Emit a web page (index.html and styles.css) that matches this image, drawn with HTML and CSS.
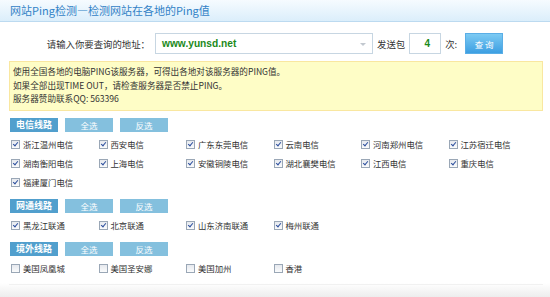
FILE: index.html
```html
<!DOCTYPE html>
<html lang="zh-CN">
<head>
<meta charset="utf-8">
<title>网站Ping检测</title>
<link rel="stylesheet" href="styles.css">
</head>
<body>
<div class="page">
  <div class="header">网站Ping检测—检测网站在各地的Ping值</div>
  <div class="query">
    <span class="q-label">请输入你要查询的地址：</span>
    <div class="url-box"><span class="url">www.yunsd.net</span><span class="arrow"></span></div>
    <span class="q-text">发送包</span>
    <div class="count-box">4</div>
    <span class="q-text">次:</span>
    <button class="btn-query">查 询</button>
  </div>
  <div class="notice">
    <p>使用全国各地的电脑PING该服务器，可得出各地对该服务器的PING值。</p>
    <p>如果全部出现TIME OUT，请检查服务器是否禁止PING。</p>
    <p>服务器赞助联系QQ: 563396</p>
  </div>

  <div class="section">
    <div class="tags"><span class="tag tag-title">电信线路</span><span class="tag">全选</span><span class="tag">反选</span></div>
    <div class="grid">
      <label class="item"><span class="cb on"></span>浙江温州电信</label>
      <label class="item"><span class="cb on"></span>西安电信</label>
      <label class="item"><span class="cb on"></span>广东东莞电信</label>
      <label class="item"><span class="cb on"></span>云南电信</label>
      <label class="item"><span class="cb on"></span>河南郑州电信</label>
      <label class="item"><span class="cb on"></span>江苏宿迁电信</label>
      <label class="item"><span class="cb on"></span>湖南衡阳电信</label>
      <label class="item"><span class="cb on"></span>上海电信</label>
      <label class="item"><span class="cb on"></span>安徽铜陵电信</label>
      <label class="item"><span class="cb on"></span>湖北襄樊电信</label>
      <label class="item"><span class="cb on"></span>江西电信</label>
      <label class="item"><span class="cb on"></span>重庆电信</label>
      <label class="item"><span class="cb on"></span>福建厦门电信</label>
    </div>
  </div>

  <div class="section">
    <div class="tags"><span class="tag tag-title">网通线路</span><span class="tag">全选</span><span class="tag">反选</span></div>
    <div class="grid">
      <label class="item"><span class="cb on"></span>黑龙江联通</label>
      <label class="item"><span class="cb on"></span>北京联通</label>
      <label class="item"><span class="cb on"></span>山东济南联通</label>
      <label class="item"><span class="cb on"></span>梅州联通</label>
    </div>
  </div>

  <div class="section">
    <div class="tags"><span class="tag tag-title">境外线路</span><span class="tag">全选</span><span class="tag">反选</span></div>
    <div class="grid">
      <label class="item"><span class="cb"></span>美国凤凰城</label>
      <label class="item"><span class="cb"></span>美国圣安娜</label>
      <label class="item"><span class="cb"></span>美国加州</label>
      <label class="item"><span class="cb"></span>香港</label>
    </div>
  </div>
  <div class="footer"><div class="footer-line"></div></div>
</div>
</body>
</html>
```
FILE: styles.css
```css
* { box-sizing: border-box; }
html, body { margin: 0; padding: 0; background: #fff; }
body {
  width: 550px;
  height: 297px;
  overflow: hidden;
  font-family: "Noto Sans CJK SC", "Noto Sans", sans-serif;
  color: #333;
}
.page { position: relative; height: 297px; }

.header {
  height: 22px;
  padding-left: 10px;
  line-height: 21px;
  font-size: 11px;
  color: #3282c6;
  background: linear-gradient(#f6fbff, #dbeefb);
  border-bottom: 1px solid #bcdaf0;
}

.query {
  display: flex;
  align-items: center;
  height: 21px;
  margin-top: 11px;
  font-size: 9.4px;
}
.q-label { width: 150px; text-align: right; color: #333; }
.url-box {
  position: relative;
  margin-left: 5px;
  width: 218px;
  height: 21px;
  border: 1px solid #c7d6e2;
  background: #fff;
  display: flex;
  align-items: center;
  padding-left: 6px;
}
.url {
  font-family: "Liberation Sans", Arial, sans-serif;
  font-weight: bold;
  font-size: 10.2px;
  color: #1b8a1b;
}
.arrow {
  position: absolute;
  right: 6px;
  top: 9px;
  width: 0; height: 0;
  border-left: 3px solid transparent;
  border-right: 3px solid transparent;
  border-top: 3px solid #c2c8cf;
}
.q-text { margin-left: 4px; }
.count-box {
  margin-left: 4px;
  width: 32px;
  height: 21px;
  border: 1px solid #c7d6e2;
  text-align: right;
  padding-right: 10px;
  line-height: 19px;
  font-family: "Liberation Sans", Arial, sans-serif;
  font-weight: bold;
  font-size: 10px;
  color: #1b8a1b;
}
.btn-query {
  margin-left: 8px;
  width: 38px;
  height: 21px;
  border: 1px solid #5aaee6;
  background: linear-gradient(#7ccaf3, #3d9fe2);
  color: #fff;
  font-family: inherit;
  font-size: 8.5px;
  padding: 0;
}

.notice {
  margin: 7px 7px 0 9px;
  padding: 3px 3px 4px;
  background: #fefdc6;
  border: 1px solid #f9e7a0;
  font-size: 8.6px;
  line-height: 13.5px;
  color: #333;
}
.notice p { margin: 0; }

.section { margin-left: 10px; margin-top: 7px; }
.section:first-of-type { margin-top: 8px; }
.tags { display: flex; gap: 7px; height: 14px; }
.tag {
  width: 48px;
  height: 14px;
  line-height: 14px;
  text-align: center;
  background: #84c0de;
  color: #fff;
  font-size: 8.5px;
}
.tag-title { background: #519fcd; font-weight: bold; font-size: 9px; }

.grid {
  margin-top: 3px;
  display: grid;
  grid-template-columns: repeat(6, 87.5px);
  grid-auto-rows: 19px;
}
.item {
  display: flex;
  align-items: center;
  font-size: 8.4px;
  color: #333;
  padding-left: 1px;
}
.cb {
  position: relative;
  width: 9px;
  height: 9px;
  margin-right: 3px;
  border: 1px solid #9aa7b6;
  background: linear-gradient(#e6e9ee, #fafbfc);
  flex: none;
}
.cb.on::after {
  content: "";
  position: absolute;
  left: 2px;
  top: 0px;
  width: 2px;
  height: 4px;
  border-right: 1.5px solid #2d4f9e;
  border-bottom: 1.5px solid #2d4f9e;
  transform: rotate(40deg);
}

.footer {
  position: absolute;
  left: 0; right: 0; bottom: 0;
  height: 14px;
  background: linear-gradient(#ffffff, #ededed);
}
.footer-line {
  margin: 1px 7px 0 9px;
  height: 1px;
  background: #f1f1f1;
}
```
